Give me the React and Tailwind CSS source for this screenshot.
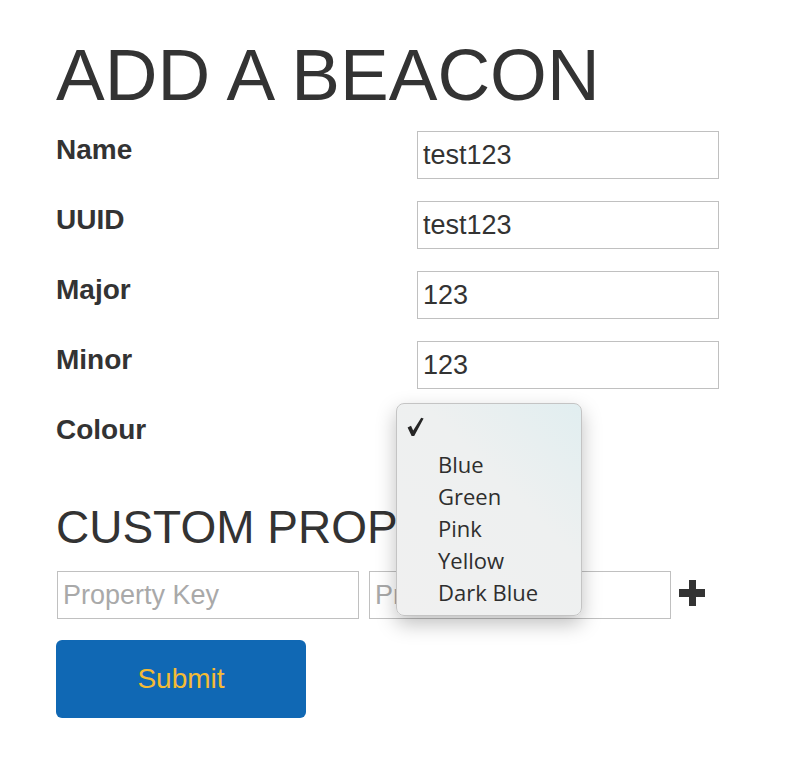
import React from 'react';

const FIELDS = [
  { label: 'Name', value: 'test123' },
  { label: 'UUID', value: 'test123' },
  { label: 'Major', value: '123' },
  { label: 'Minor', value: '123' },
];

const COLOURS = ['Blue', 'Green', 'Pink', 'Yellow', 'Dark Blue'];

function Check() {
  return (
    <svg width="18" height="20" viewBox="0 0 18 20" className="mt-[1px] ml-[10px]">
      <path d="M0.6 10.6 L4 8.8 L6.2 13.4 L14.2 0.8 L16.6 1.6 L7.2 19 L4.6 19 Z" fill="#262626" />
    </svg>
  );
}

function ColourMenu() {
  return (
    <div className="absolute left-[-21px] top-[-8px] z-10 w-[186px] h-[213px] rounded-[8px] border border-[#c4c4c4] bg-[linear-gradient(225deg,#e1eef0_0%,#eef0f0_40%,#f0f0f0_100%)] shadow-[0_8px_20px_rgba(0,0,0,0.25)] pt-[12px] font-['Open_Sans',sans-serif] text-[22px] text-[#2e2e2e]">
      <div className="h-[32px] flex items-start">
        <Check />
      </div>
      {COLOURS.map(c => (
        <div key={c} className="h-[32px] flex items-center pl-[41px] leading-none">
          {c}
        </div>
      ))}
    </div>
  );
}

export default function App() {
  return (
    <div className="min-h-[766px] bg-white pl-[56px] pt-[38px] text-[#333] font-['Liberation_Sans',Arial,sans-serif]">
      <h1 className="text-[73px] leading-none">ADD A BEACON</h1>

      <div className="mt-[20px] flex flex-col gap-[22px]">
        {FIELDS.map(f => (
          <div key={f.label} className="flex h-[48px]">
            <label className="w-[361px] text-[28px] font-bold leading-[37px]">{f.label}</label>
            <input
              readOnly
              value={f.value}
              className="w-[302px] h-[48px] border border-[#c0c0c0] px-[5px] text-[27px] text-[#333] outline-none"
            />
          </div>
        ))}
        <div className="flex h-[48px]">
          <label className="w-[361px] text-[28px] font-bold leading-[37px]">Colour</label>
          <div className="relative w-[120px] h-[48px]">
            <ColourMenu />
          </div>
        </div>
      </div>

      <h2 className="mt-[45px] text-[46px] leading-none">CUSTOM PROPERTIES</h2>

      <div className="mt-[21px] flex items-center">
        <input
          placeholder="Property Key"
          className="ml-px w-[302px] h-[48px] border border-[#c0c0c0] px-[5px] text-[27px] placeholder:text-[#a9a9a9] outline-none"
        />
        <input
          placeholder="Property Value"
          className="ml-[10px] w-[302px] h-[48px] border border-[#c0c0c0] px-[5px] text-[27px] placeholder:text-[#a9a9a9] outline-none"
        />
        <svg width="26" height="26" viewBox="0 0 26 26" className="ml-[8px] mt-[-4px]">
          <rect x="10" y="0" width="7" height="26" fill="#333" />
          <rect x="0" y="9" width="26" height="8" fill="#333" />
        </svg>
      </div>

      <button className="mt-[21px] w-[250px] h-[78px] rounded-[6px] bg-[#1068b4] text-[#f4bb35] text-[28px]">
        Submit
      </button>
    </div>
  );
}
